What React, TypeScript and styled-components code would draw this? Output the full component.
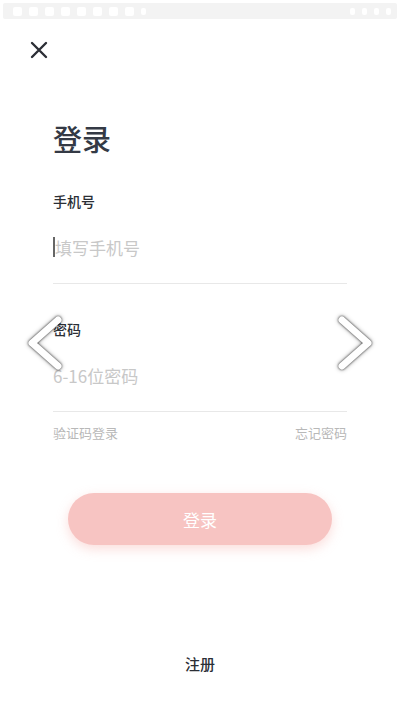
import React from 'react';
import styled, { createGlobalStyle } from 'styled-components';

const GlobalStyle = createGlobalStyle`
  html, body {
    margin: 0;
    padding: 0;
    background: #fff;
  }
  body {
    font-family: "Noto Sans CJK SC", "Noto Sans", sans-serif;
  }
`;

const Screen = styled.div`
  position: relative;
  width: 400px;
  height: 707px;
  overflow: hidden;
  background: #fff;
  display: flex;
  flex-direction: column;
`;

const StatusBar = styled.div`
  margin: 3px 3px 0;
  height: 16px;
  background: #f3f3f3;
  border-radius: 2px;
  display: flex;
  align-items: center;
  justify-content: space-between;
  padding: 0 6px 0 10px;
`;

const StatusGroup = styled.div`
  display: flex;
  align-items: center;
  gap: 7px;
`;

const StatusDot = styled.span<{ small?: boolean }>`
  width: ${(p) => (p.small ? 5 : 9)}px;
  height: ${(p) => (p.small ? 7 : 9)}px;
  background: #fff;
  border-radius: 2px;
`;

const CloseButton = styled.button`
  margin: 22px 0 0 30px;
  width: 18px;
  height: 18px;
  padding: 0;
  border: none;
  background: none;
  display: flex;
`;

const Form = styled.div`
  padding: 0 53px;
  display: flex;
  flex-direction: column;
`;

const Title = styled.h1`
  margin: 59px 0 0;
  font-size: 29px;
  font-weight: 500;
  color: #343a45;
  line-height: 40px;
`;

const Label = styled.div<{ top: number }>`
  margin-top: ${(p) => p.top}px;
  font-size: 14px;
  font-weight: 500;
  color: #2b2f36;
  line-height: 20px;
`;

const Field = styled.div`
  display: flex;
  align-items: center;
  height: 72px;
  border-bottom: 1px solid #e8e8e8;
`;

const Cursor = styled.span`
  width: 2px;
  height: 20px;
  background: #666;
`;

const Input = styled.input`
  flex: 1;
  border: none;
  outline: none;
  padding: 0;
  font-family: inherit;
  font-size: 17px;
  color: #333;
  background: transparent;
  &::placeholder {
    color: #c8c8c8;
  }
`;

const LinkRow = styled.div`
  display: flex;
  justify-content: space-between;
  margin-top: 13px;
  font-size: 13px;
  color: #b8b8b8;
  line-height: 16px;
`;

const SubmitButton = styled.button`
  margin: 52px auto 0;
  width: 264px;
  height: 52px;
  border: none;
  border-radius: 26px;
  background: #f7c4c2;
  color: #fff;
  font-family: inherit;
  font-size: 17px;
  box-shadow: 0 4px 12px rgba(247, 180, 176, 0.45);
`;

const RegisterLink = styled.div`
  margin-top: 108px;
  text-align: center;
  font-size: 15px;
  color: #2b2f36;
  font-weight: 500;
`;

const Chevron = styled.svg<{ side: 'left' | 'right' }>`
  position: absolute;
  top: 314px;
  ${(p) => (p.side === 'left' ? 'left: 24px;' : 'left: 334px;')}
  width: 42px;
  height: 58px;
  filter: drop-shadow(0 0 1px rgba(0, 0, 0, 0.75)) drop-shadow(0 0 2px rgba(0, 0, 0, 0.35));
`;

function CloseIcon() {
  return (
    <svg width="18" height="18" viewBox="0 0 18 18">
      <path d="M2 2L16 16M16 2L2 16" stroke="#2c2f36" strokeWidth="2.4" strokeLinecap="round" />
    </svg>
  );
}

function Arrow({ side }: { side: 'left' | 'right' }) {
  const d = side === 'left' ? 'M34 6L8 29L34 52' : 'M8 6L34 29L8 52';
  return (
    <Chevron side={side} viewBox="0 0 42 58">
      <path d={d} fill="none" stroke="#fff" strokeWidth="7" strokeLinecap="round" strokeLinejoin="round" />
    </Chevron>
  );
}

export default function App() {
  return (
    <Screen>
      <GlobalStyle />
      <StatusBar>
        <StatusGroup>
          {Array.from({ length: 8 }).map((_, i) => (
            <StatusDot key={i} />
          ))}
          <StatusDot small />
        </StatusGroup>
        <StatusGroup>
          <StatusDot small />
          <StatusDot small />
          <StatusDot small />
          <StatusDot small />
        </StatusGroup>
      </StatusBar>
      <CloseButton>
        <CloseIcon />
      </CloseButton>
      <Form>
        <Title>登录</Title>
        <Label top={33}>手机号</Label>
        <Field>
          <Cursor />
          <Input placeholder="填写手机号" />
        </Field>
        <Label top={35}>密码</Label>
        <Field>
          <Input placeholder="6-16位密码" />
        </Field>
        <LinkRow>
          <span>验证码登录</span>
          <span>忘记密码</span>
        </LinkRow>
      </Form>
      <SubmitButton>登录</SubmitButton>
      <RegisterLink>注册</RegisterLink>
      <Arrow side="left" />
      <Arrow side="right" />
    </Screen>
  );
}
